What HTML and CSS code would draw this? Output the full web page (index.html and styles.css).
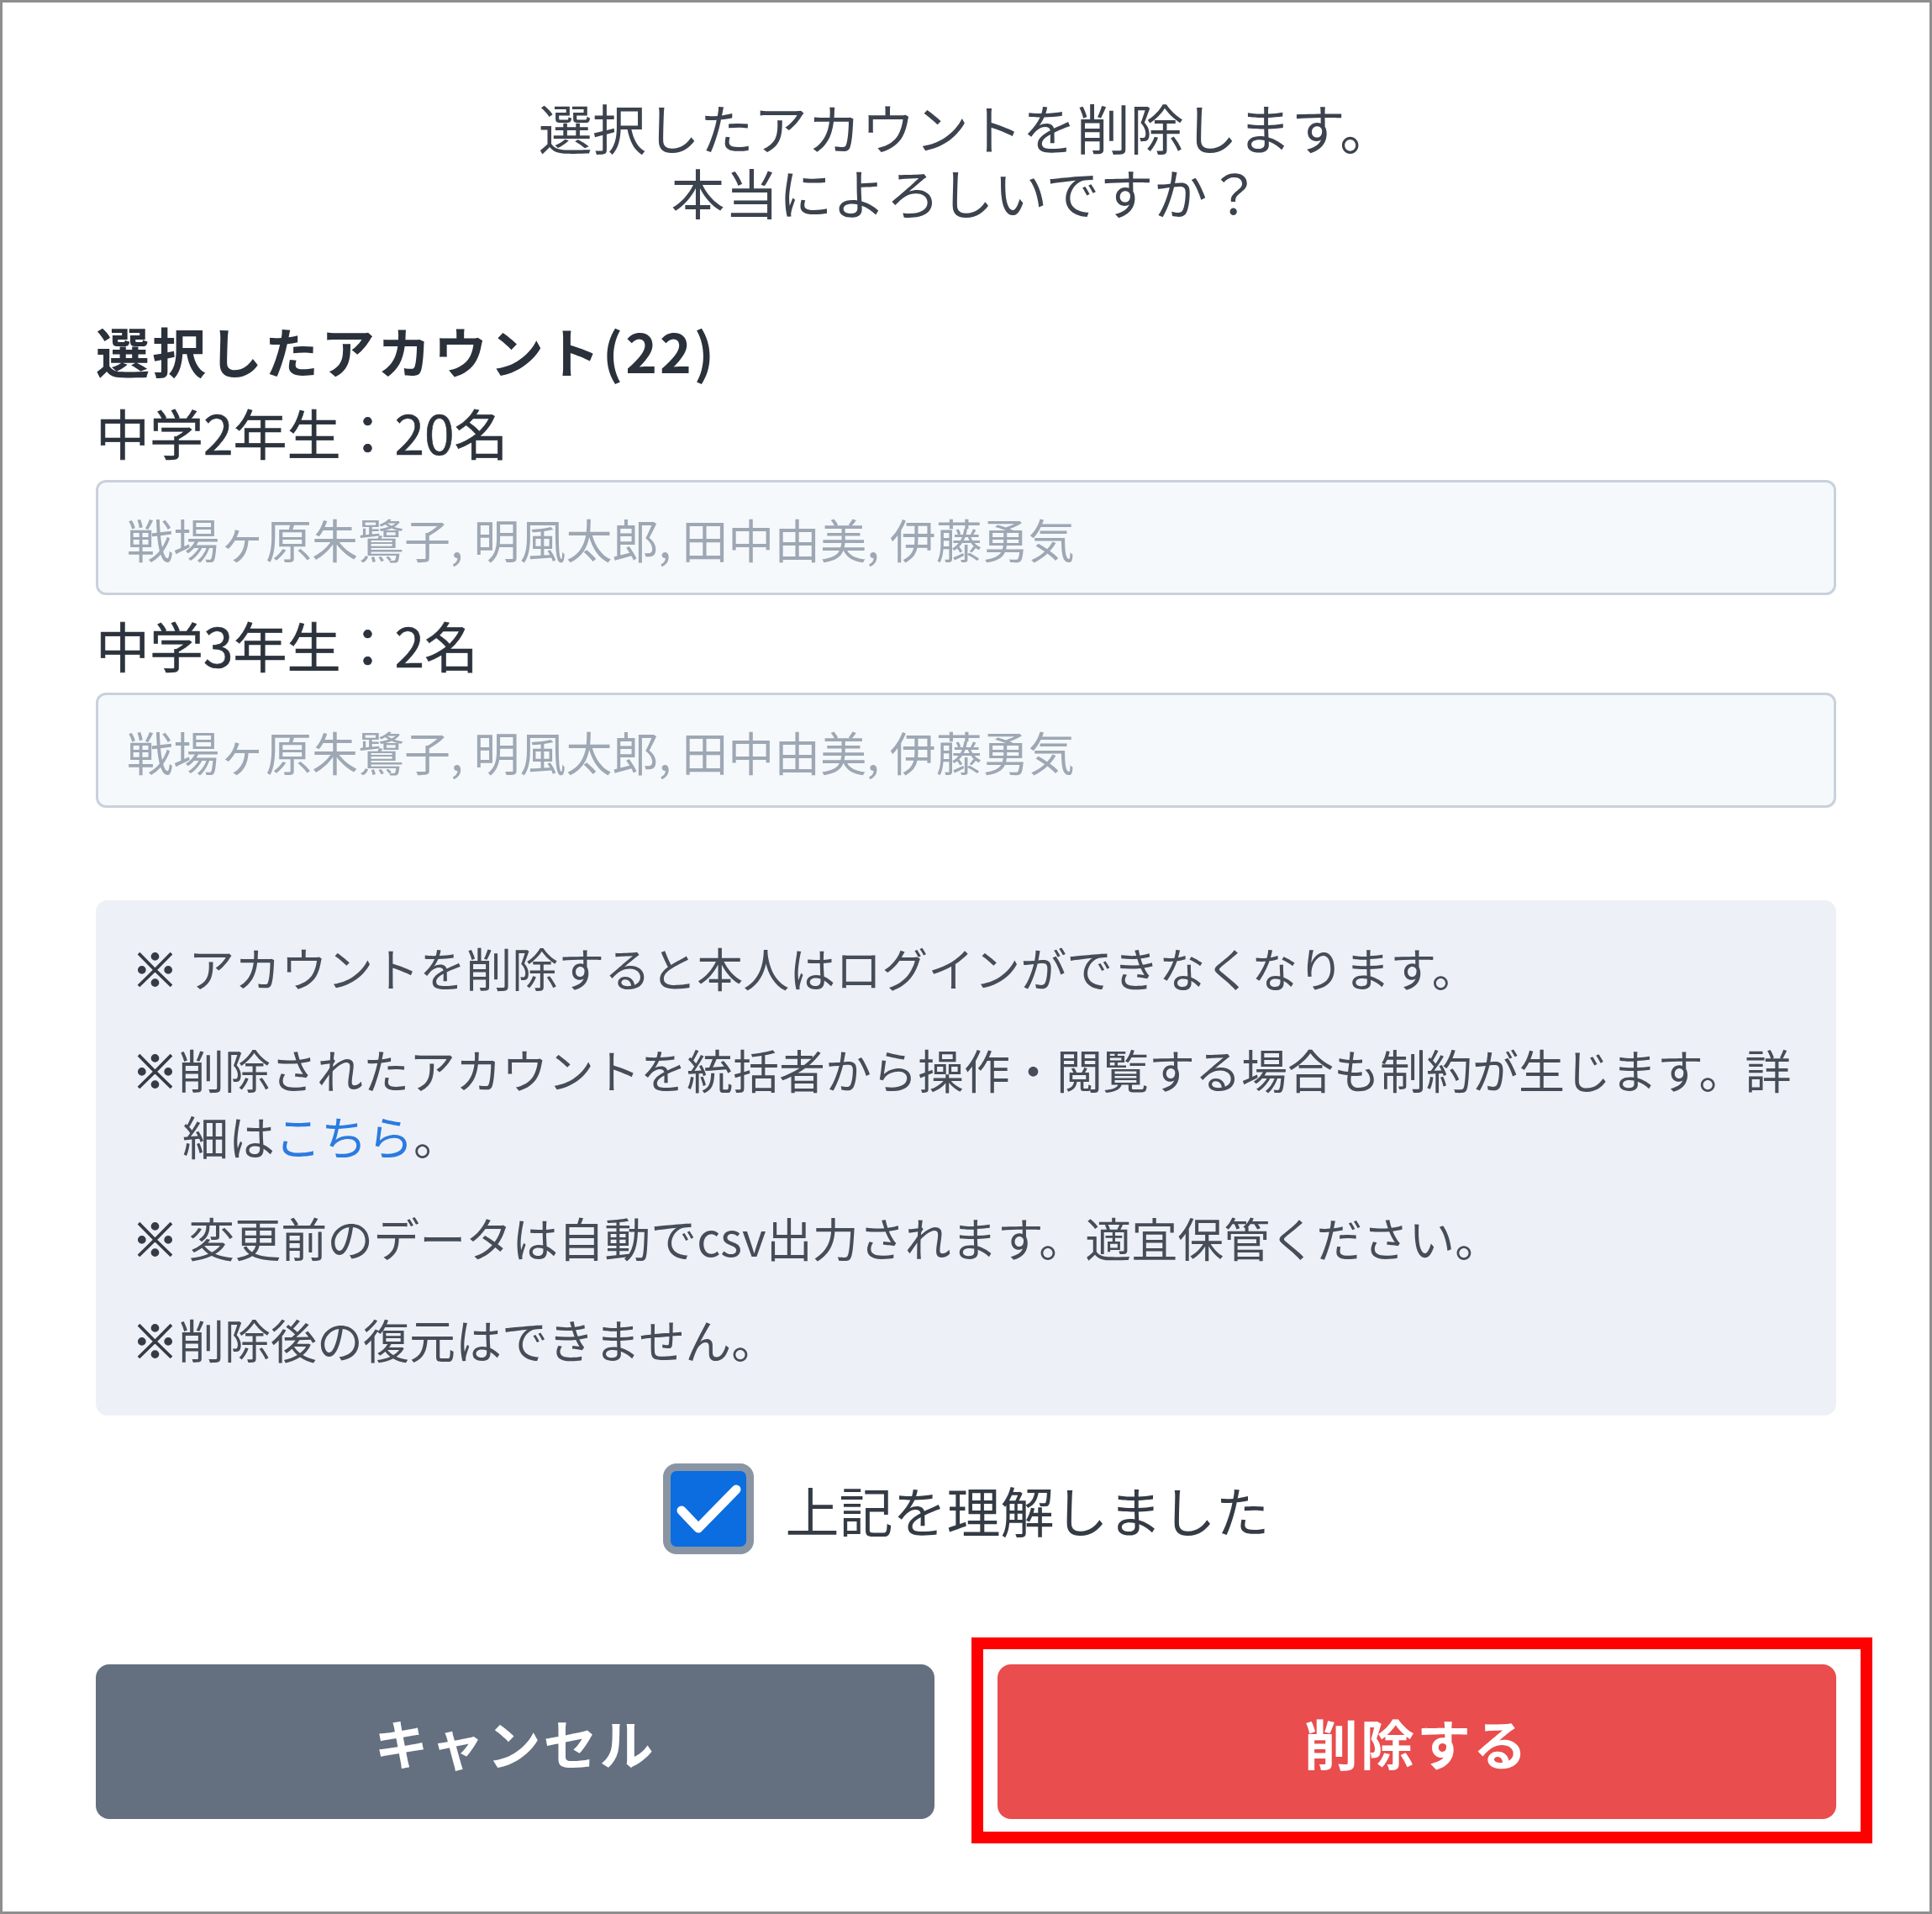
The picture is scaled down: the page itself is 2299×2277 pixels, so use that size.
FILE: index.html
```html
<!DOCTYPE html>
<html lang="ja">
<head>
<meta charset="utf-8">
<title>アカウント削除</title>
<link rel="stylesheet" href="styles.css">
</head>
<body>
<div class="frame">
  <div class="dialog">
    <p class="title">選択したアカウントを削除します。<br>本当によろしいですか？</p>

    <h2 class="heading">選択したアカウント(22)</h2>

    <div class="group">
      <div class="group-label">中学2年生：20名</div>
      <div class="names">戦場ヶ原朱鷺子, 明風太郎, 田中由美, 伊藤勇気</div>
    </div>

    <div class="group">
      <div class="group-label">中学3年生：2名</div>
      <div class="names">戦場ヶ原朱鷺子, 明風太郎, 田中由美, 伊藤勇気</div>
    </div>

    <div class="notice">
      <p><span class="mark">※</span> アカウントを削除すると本人はログインができなくなります。</p>
      <p><span class="mark">※</span>削除されたアカウントを統括者から操作・閲覧する場合も制約が生じます。詳細は<a class="link" href="#">こちら</a>。</p>
      <p><span class="mark">※</span> 変更前のデータは自動でcsv出力されます。適宜保管ください。</p>
      <p><span class="mark">※</span>削除後の復元はできません。</p>
    </div>

    <label class="confirm">
      <span class="checkbox">
        <svg class="check" viewBox="0 0 90 90" width="90" height="90" aria-hidden="true">
          <polyline points="13,47 33,68 78,22" fill="none" stroke="#ffffff" stroke-width="11" stroke-linecap="round" stroke-linejoin="round"/>
        </svg>
      </span>
      <span class="confirm-text">上記を理解しました</span>
    </label>

    <div class="actions">
      <button class="btn btn-cancel" type="button">キャンセル</button>
      <div class="delete-wrap">
        <button class="btn btn-delete" type="button">削除する</button>
        <span class="highlight"></span>
      </div>
    </div>
  </div>
</div>
</body>
</html>
```

FILE: styles.css
```css
* {
  box-sizing: border-box;
}

html, body {
  margin: 0;
  padding: 0;
  background: #ffffff;
}

body {
  font-family: "Noto Sans CJK JP", "Noto Sans", sans-serif;
  color: #343b45;
}

.frame {
  width: 2299px;
  height: 2277px;
  border: 3px solid #8e8e8e;
  background: #ffffff;
  overflow: hidden;
}

.dialog {
  padding: 109px 111px 0 111px;
}

.title {
  margin: 0;
  text-align: center;
  font-size: 64px;
  line-height: 77px;
  font-weight: 400;
  color: #3c434e;
}

.heading {
  margin: 112px 0 0 0;
  font-size: 64px;
  line-height: 77px;
  font-weight: 700;
  letter-spacing: 3px;
  color: #2a313b;
}

.group-label {
  margin: 20px 0 19px 0;
  font-size: 64px;
  line-height: 77px;
  font-weight: 400;
  color: #2c333d;
  -webkit-text-stroke: 0.6px #2c333d;
}

.names {
  height: 137px;
  display: flex;
  align-items: center;
  padding: 0 34px;
  border: 3px solid #c9d1dc;
  border-radius: 12px;
  background: #f6f9fc;
  font-size: 55px;
  color: #9ea8b4;
  white-space: nowrap;
}

.notice {
  margin-top: 110px;
  padding: 40px 40px 52px 43px;
  background: #edf1f7;
  border-radius: 14px;
  font-size: 55px;
  line-height: 79px;
  color: #464d58;
}

.notice p {
  margin: 0;
  padding-left: 60px;
  text-indent: -60px;
}

.notice p + p {
  margin-top: 42px;
}

.mark {
  display: inline-block;
  width: 55px;
  text-indent: 0;
  text-align: left;
  font-weight: 700;
  color: #353c47;
  -webkit-text-stroke: 1.5px #353c47;
}

.link {
  color: #2b7be0;
  text-decoration: none;
}

.confirm {
  margin-top: 57px;
  display: flex;
  justify-content: center;
  align-items: center;
  gap: 38px;
}

.checkbox {
  width: 108px;
  height: 108px;
  flex: none;
  border: 9px solid #8a95a4;
  border-radius: 16px;
  background: #0b6ddf;
  display: flex;
  align-items: center;
  justify-content: center;
}

.check {
  display: block;
}

.confirm-text {
  font-size: 64px;
  line-height: 77px;
  color: #343b45;
}

.actions {
  margin-top: 131px;
  display: grid;
  grid-template-columns: 1fr 1fr;
  gap: 75px;
}

.btn {
  display: block;
  width: 100%;
  height: 184px;
  border: none;
  border-radius: 16px;
  font-family: "Noto Sans CJK JP", "Noto Sans", sans-serif;
  font-size: 64px;
  font-weight: 700;
  letter-spacing: 3px;
  color: #ffffff;
  padding: 0;
}

.btn-cancel {
  background: #647080;
}

.btn-delete {
  background: #e94d4d;
}

.delete-wrap {
  position: relative;
}

.highlight {
  position: absolute;
  top: -32px;
  left: -31px;
  right: -43px;
  bottom: -29px;
  border: 14px solid #ff0000;
  pointer-events: none;
}
```
